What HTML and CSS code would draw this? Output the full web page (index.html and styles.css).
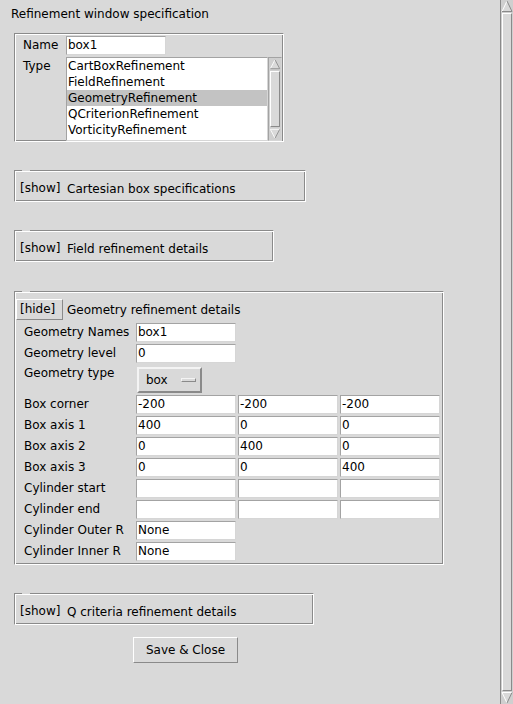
FILE: index.html
```html
<!DOCTYPE html>
<html>
<head>
<meta charset="utf-8">
<link rel="stylesheet" href="styles.css">
</head>
<body>
<div class="window">
  <div class="content">
    <div class="title">Refinement window specification</div>

    <div class="group selector">
      <div class="lbl">Name</div>
      <div class="entry name-entry">box1</div>
      <div class="lbl lbl-top">Type</div>
      <div class="listwrap">
        <ul class="listbox">
          <li>CartBoxRefinement</li>
          <li>FieldRefinement</li>
          <li class="sel">GeometryRefinement</li>
          <li>QCriterionRefinement</li>
          <li>VorticityRefinement</li>
        </ul>
        <div class="sb sb-list">
          <svg class="arrow" width="14" height="12" viewBox="0 0 14 12"><polygon points="1.5,11.5 7,1 12.5,11.5" fill="#d9d9d9"/><polyline points="1.5,11.5 7,1" fill="none" stroke="#fff"/><polyline points="7,1 12.5,11.5 1.5,11.5" fill="none" stroke="#8a8a8a"/></svg>
          <div class="slider"></div>
          <svg class="arrow" width="14" height="12" viewBox="0 0 14 12"><polygon points="1.5,0.5 7,11 12.5,0.5" fill="#d9d9d9"/><polyline points="12.5,0.5 1.5,0.5 7,11" fill="none" stroke="#fff"/><polyline points="7,11 12.5,0.5" fill="none" stroke="#8a8a8a"/></svg>
        </div>
      </div>
    </div>

    <div class="group section notch w-cart">
      <div class="sec-head"><span class="toggle">[show]</span><span class="sec-title">Cartesian box specifications</span></div>
    </div>

    <div class="group section notch w-field">
      <div class="sec-head"><span class="toggle">[show]</span><span class="sec-title">Field refinement details</span></div>
    </div>

    <div class="group section notch w-geom">
      <div class="sec-head"><span class="toggle raised">[hide]</span><span class="sec-title">Geometry refinement details</span></div>
      <div class="fields">
        <div class="flbl">Geometry Names</div><div class="entry">box1</div><div></div><div></div>
        <div class="flbl">Geometry level</div><div class="entry">0</div><div></div><div></div>
        <div class="flbl flbl-top">Geometry type</div>
        <div class="menubtn"><span>box</span><span class="indicator"></span></div><div></div><div></div>
        <div class="flbl">Box corner</div><div class="entry">-200</div><div class="entry">-200</div><div class="entry">-200</div>
        <div class="flbl">Box axis 1</div><div class="entry">400</div><div class="entry">0</div><div class="entry">0</div>
        <div class="flbl">Box axis 2</div><div class="entry">0</div><div class="entry">400</div><div class="entry">0</div>
        <div class="flbl">Box axis 3</div><div class="entry">0</div><div class="entry">0</div><div class="entry">400</div>
        <div class="flbl">Cylinder start</div><div class="entry"></div><div class="entry"></div><div class="entry"></div>
        <div class="flbl">Cylinder end</div><div class="entry"></div><div class="entry"></div><div class="entry"></div>
        <div class="flbl">Cylinder Outer R</div><div class="entry">None</div><div></div><div></div>
        <div class="flbl">Cylinder Inner R</div><div class="entry">None</div><div></div><div></div>
      </div>
    </div>

    <div class="group section notch w-q">
      <div class="sec-head"><span class="toggle">[show]</span><span class="sec-title">Q criteria refinement details</span></div>
    </div>

    <div class="btn">Save &amp; Close</div>
  </div>

  <div class="sb sb-main">
    <svg class="arrow" width="12" height="12" viewBox="0 0 12 12"><polygon points="1,11.5 6,1 11,11.5" fill="#d9d9d9"/><polyline points="1,11.5 6,1" fill="none" stroke="#fff"/><polyline points="6,1 11,11.5 1,11.5" fill="none" stroke="#8a8a8a"/></svg>
    <div class="slider"></div>
    <svg class="arrow" width="12" height="12" viewBox="0 0 12 12"><polygon points="1,0.5 6,11 11,0.5" fill="#d9d9d9"/><polyline points="11,0.5 1,0.5 6,11" fill="none" stroke="#fff"/><polyline points="6,11 11,0.5" fill="none" stroke="#8a8a8a"/></svg>
  </div>
</div>
</body>
</html>
```

FILE: styles.css
```css
* { box-sizing: border-box; }

html, body {
  margin: 0;
  padding: 0;
  background: #d9d9d9;
  overflow: hidden;
}

body {
  font-family: "DejaVu Sans", sans-serif;
  font-size: 12px;
  color: #000;
}

.window {
  display: flex;
  width: 513px;
  height: 704px;
}

.content {
  width: 500px;
  padding: 6px 0 0 14px;
  display: flex;
  flex-direction: column;
  align-items: flex-start;
}

.title {
  margin-left: -3px;
  line-height: 16px;
  height: 16px;
  margin-bottom: 11px;
}

/* groove frame */
.group {
  position: relative;
  border-style: solid;
  border-width: 1px;
  border-color: #8a8a8a #ffffff #ffffff #8a8a8a;
  box-shadow: inset 1px 1px 0 #ffffff, inset -1px -1px 0 #8a8a8a;
  padding: 1px;
}

.notch::before {
  content: "";
  position: absolute;
  top: -1px;
  left: 7px;
  width: 8px;
  height: 1px;
  background: #d9d9d9;
}

.selector {
  width: 270px;
  display: grid;
  grid-template-columns: 50px 216px;
  row-gap: 2px;
  padding: 2px 1px 0 1px;
  margin-bottom: 28px;
}

.lbl {
  padding-left: 7px;
  line-height: 19px;
}

.lbl-top {
  line-height: 18px;
}

.entry {
  height: 19px;
  background: #fff;
  border: 1px solid;
  border-color: #a3a3a3 #d6d6d6 #d6d6d6 #a3a3a3;
  padding-left: 1px;
  line-height: 17px;
  white-space: nowrap;
  overflow: hidden;
}

.name-entry {
  width: 100px;
}

.listwrap {
  display: flex;
  height: 84px;
}

.listbox {
  list-style: none;
  margin: 0;
  padding: 0;
  width: 202px;
  height: 84px;
  background: #fff;
  border: 1px solid;
  border-color: #a3a3a3 #d6d6d6 #d6d6d6 #a3a3a3;
  overflow: hidden;
}

.listbox li {
  height: 16px;
  line-height: 16px;
  padding-left: 1px;
  white-space: nowrap;
}

.listbox li.sel {
  background: #c3c3c3;
}

/* scrollbars */
.sb {
  display: flex;
  flex-direction: column;
  background: #cfcfcf;
}

.sb .arrow {
  display: block;
  flex: none;
}

.sb .slider {
  flex: 1;
  margin: 1px 1px;
  background: #d9d9d9;
  border: 1px solid;
  border-color: #ffffff #8a8a8a #8a8a8a #ffffff;
}

.sb-list {
  width: 14px;
  height: 84px;
  border: 1px solid;
  border-color: #a3a3a3 #d6d6d6 #d6d6d6 #a3a3a3;
}

.sb-list .arrow {
  width: 12px;
}

.sb-main {
  width: 13px;
  height: 704px;
  border-left: 1px solid #8a8a8a;
}

/* collapsible sections */
.section {
  padding: 7px 1px 2px 1px;
  margin-bottom: 28px;
}

.w-cart { width: 292px; }
.w-field { width: 260px; margin-bottom: 29px; }
.w-geom { width: 430px; padding-bottom: 3px; }
.w-q { width: 300px; margin-bottom: 12px; }

.sec-head {
  display: flex;
  align-items: center;
  height: 21px;
}

.toggle {
  width: 47px;
  height: 21px;
  line-height: 19px;
  padding-left: 3px;
  border: 1px solid transparent;
  white-space: nowrap;
}

.toggle.raised {
  border-color: #ffffff #8a8a8a #8a8a8a #ffffff;
}

.sec-title {
  margin-left: 4px;
  white-space: nowrap;
}

.fields {
  margin-top: 3px;
  display: grid;
  grid-template-columns: 118px 100px 100px 100px;
  column-gap: 2px;
  row-gap: 2px;
}

.flbl {
  padding-left: 8px;
  line-height: 19px;
  white-space: nowrap;
}

.flbl-top {
  line-height: 17px;
}

.menubtn {
  margin: 2px 0 0 1px;
  width: 65px;
  height: 26px;
  border: 2px solid;
  border-color: #f4f4f4 #8a8a8a #8a8a8a #f4f4f4;
  display: flex;
  align-items: center;
  padding-left: 7px;
  white-space: nowrap;
}

.indicator {
  width: 15px;
  height: 4px;
  margin-left: 13px;
  border: 1px solid;
  border-color: #f4f4f4 #8a8a8a #8a8a8a #f4f4f4;
  background: #d9d9d9;
}

.btn {
  margin-left: 119px;
  width: 105px;
  height: 26px;
  border: 1px solid;
  border-color: #ffffff #8a8a8a #8a8a8a #ffffff;
  display: flex;
  align-items: center;
  justify-content: center;
}
```
